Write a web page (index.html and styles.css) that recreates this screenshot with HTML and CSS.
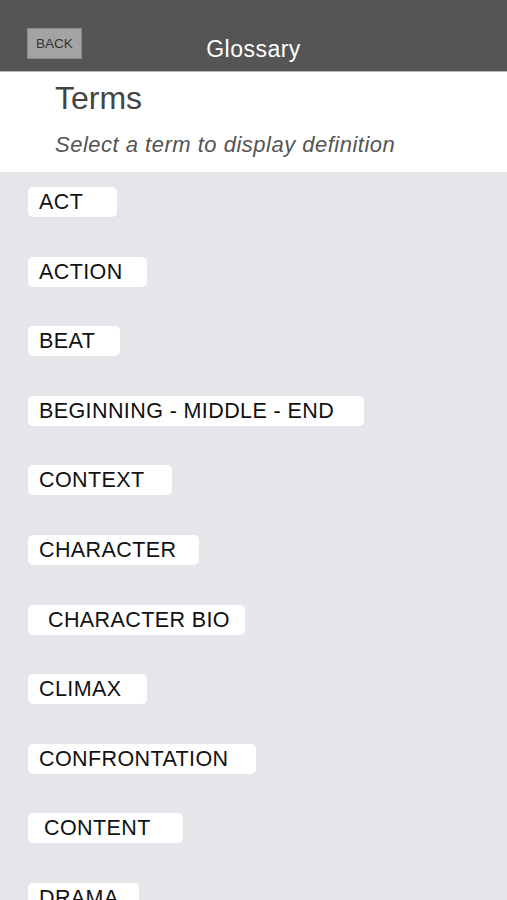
FILE: index.html
```html
<!DOCTYPE html>
<html lang="en">
<head>
  <meta charset="UTF-8" />
  <meta name="viewport" content="width=device-width, initial-scale=1.0"/>
  <title>Glossary</title>

  <link rel="stylesheet" href="styles.css">
</head>
<body>
  <div class="topbar">
    <button class="back">BACK</button>
    <div class="title">Glossary</div>
  </div>

  <div class="intro">
    <h1>Terms</h1>
    <p>Select a term to display definition</p>
  </div>

  <div class="terms">
    <div class="term" style="width: 89px">ACT</div>
    <div class="term" style="width: 119px">ACTION</div>
    <div class="term" style="width: 92px">BEAT</div>
    <div class="term" style="width: 336px">BEGINNING - MIDDLE - END</div>
    <div class="term" style="width: 144px">CONTEXT</div>
    <div class="term" style="width: 171px">CHARACTER</div>
    <div class="term indent" style="width: 217px">CHARACTER BIO</div>
    <div class="term" style="width: 119px">CLIMAX</div>
    <div class="term" style="width: 228px">CONFRONTATION</div>
    <div class="term half" style="width: 155px">CONTENT</div>
    <div class="term" style="width: 111px">DRAMA</div>
  </div>
</body>
</html>
```

FILE: styles.css
```css
* {
  box-sizing: border-box;
  margin: 0;
  padding: 0;
}

body {
  background-color: #e5e5ea;
  font-family: 'Liberation Sans', Arial, sans-serif;
  height: 900px;
  overflow: hidden;
}

.topbar {
  height: 72px;
  background-color: #555555;
  border-bottom: 1px solid #b5b5b5;
  display: flex;
  align-items: flex-end;
  padding: 0 0 12px 27px;
}

.back {
  width: 55px;
  height: 31px;
  background-color: #a3a3a3;
  border: 1px solid #8a8a8a;
  color: #333;
  font-family: 'Liberation Sans', Arial, sans-serif;
  font-size: 13.5px;
  flex-shrink: 0;
}

.title {
  flex: 1;
  text-align: center;
  color: #fff;
  font-size: 23px;
  letter-spacing: 0.5px;
  margin-left: -82px;
  line-height: 26px;
  margin-bottom: -3px;
}

.intro {
  background-color: #fff;
  height: 100px;
  padding: 7px 0 0 55px;
}

.intro h1 {
  font-size: 32px;
  font-weight: normal;
  color: #444;
  line-height: 38px;
}

.intro p {
  font-size: 22px;
  font-style: italic;
  letter-spacing: 0.5px;
  color: #555;
  margin-top: 15px;
}

.terms {
  display: flex;
  flex-direction: column;
  align-items: flex-start;
  gap: 39.6px;
  padding: 15px 0 0 28px;
}

.term {
  height: 30px;
  line-height: 30px;
  background-color: #fff;
  border-radius: 5px;
  padding-left: 11px;
  font-size: 21.5px;
  letter-spacing: 0.4px;
  color: #111;
  white-space: nowrap;
  flex-shrink: 0;
}

.term.indent {
  padding-left: 20px;
}

.term.half {
  padding-left: 16px;
}
```
